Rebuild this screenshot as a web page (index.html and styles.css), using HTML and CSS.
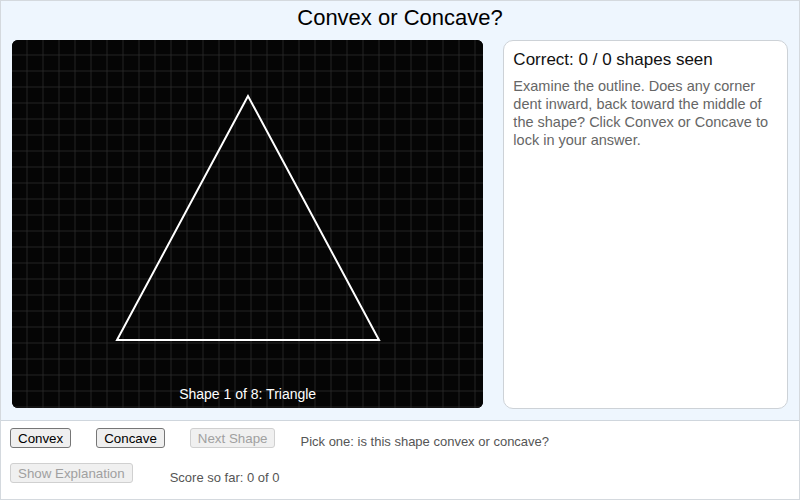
FILE: index.html
```html
<!DOCTYPE html>
<html>
<head>
<meta charset="utf-8">
<link rel="stylesheet" href="styles.css">
</head>
<body>
<div class="app">
  <div class="top">
    <h1 class="title">Convex or Concave?</h1>
    <div class="main">
      <div class="stage">
        <svg class="grid" width="472" height="368" viewBox="0 0 472 368">
          <defs>
            <pattern id="g" x="-0.5" y="-0.5" width="16" height="16" patternUnits="userSpaceOnUse">
              <path d="M16 0 V16 M0 16 H16" stroke="#2b2b2b" stroke-width="1.5" fill="none"/>
            </pattern>
          </defs>
          <rect width="472" height="368" fill="#050505"/>
          <rect width="472" height="368" fill="url(#g)"/>
          <polygon points="236,56 105,300 367,300" fill="none" stroke="#ffffff" stroke-width="2"/>
        </svg>
        <div class="shape-label">Shape 1 of 8: Triangle</div>
      </div>
      <div class="panel">
        <div class="score-head">Correct: 0 / 0 shapes seen</div>
        <p class="hint">Examine the outline. Does any corner dent inward, back toward the middle of the shape? Click Convex or Concave to lock in your answer.</p>
      </div>
    </div>
  </div>
  <div class="controls">
    <div class="row">
      <button class="btn">Convex</button>
      <button class="btn">Concave</button>
      <button class="btn" disabled>Next Shape</button>
      <span class="status">Pick one: is this shape convex or concave?</span>
    </div>
    <div class="row row2">
      <button class="btn" disabled>Show Explanation</button>
      <span class="status score">Score so far: 0 of 0</span>
    </div>
  </div>
</div>
</body>
</html>
```
FILE: styles.css
```css
* { box-sizing: border-box; }
html, body { margin: 0; padding: 0; }
body {
  width: 800px;
  height: 500px;
  overflow: hidden;
  font-family: "Liberation Sans", Arial, sans-serif;
  background: #ffffff;
}
.app {
  width: 800px;
  height: 500px;
  display: flex;
  flex-direction: column;
  border: 1px solid #d4d9de;
}
.top {
  background: #eef6fe;
  border-bottom: 1px solid #cfd6dd;
  height: 420px;
  padding: 0 11px;
}
.title {
  margin: 0;
  height: 39px;
  font-size: 22px;
  font-weight: normal;
  text-align: center;
  line-height: 33px;
  color: #000;
}
.main {
  display: flex;
  gap: 20px;
}
.stage {
  position: relative;
  width: 472px;
  height: 368px;
  border-radius: 6px;
  overflow: hidden;
  background: #050505;
}
.grid { display: block; }
.shape-label {
  position: absolute;
  left: 0;
  right: 0;
  bottom: 6px;
  text-align: center;
  color: #ffffff;
  font-size: 14px;
  line-height: 16px;
}
.panel {
  width: 285px;
  height: 369px;
  background: #ffffff;
  border: 1px solid #cdd2d7;
  border-radius: 10px;
  padding: 9px 9px;
}
.score-head {
  font-size: 17px;
  line-height: 20px;
  color: #111;
}
.hint {
  margin: 7px 0 0;
  font-size: 14.5px;
  line-height: 18px;
  color: #666;
}
.controls {
  flex: 1;
  padding: 7px 9px 0;
}
.row {
  display: flex;
  align-items: center;
  gap: 25px;
  height: 20px;
}
.row2 {
  margin-top: 15px;
  gap: 37px;
}
.btn {
  font-family: "Liberation Sans", Arial, sans-serif;
  font-size: 13.33px;
  height: 20px;
  padding: 0 7px;
  background: #efefef;
  color: #000;
  border: 1px solid #767676;
  border-radius: 3px;
}
.btn:disabled {
  color: #a0a0a0;
  background: #f0f0f0;
  border-color: #d0d0d0;
}
.status {
  font-size: 13px;
  color: #555;
  padding-top: 6px;
}
.score { padding-top: 8px; }
```
